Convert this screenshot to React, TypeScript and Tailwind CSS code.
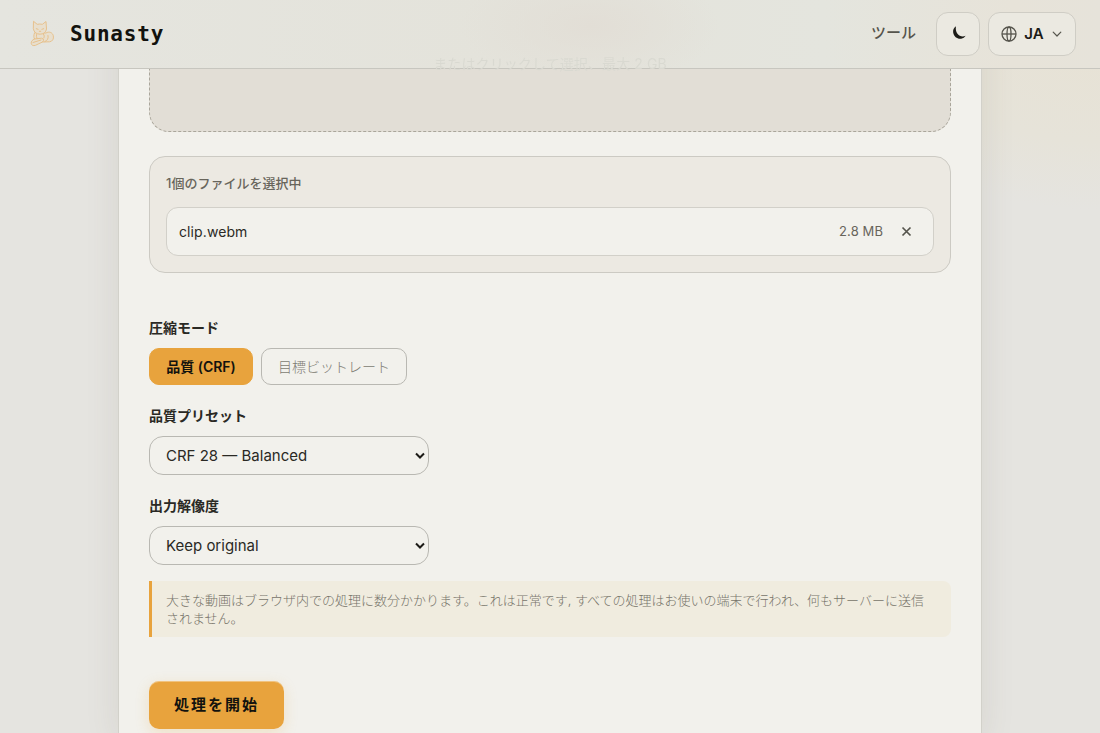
import React, { useState } from 'react'

const MODES = [
  { id: 'crf', label: '品質 (CRF)', width: 'w-[104px]' },
  { id: 'bitrate', label: '目標ビットレート', width: 'w-[146px]' },
]

function CatLogo() {
  return (
    <svg className="w-9 h-9" viewBox="0 0 36 36" fill="none" stroke="#e6bd84" strokeWidth={0.9} strokeLinecap="round" strokeLinejoin="round">
      {/* tail and body */}
      <path fill="#e8dfce" d="M10.500 17c-1 2.500-.8 4.500 0 6-2 .8-3.500 2.300-3.300 4.300.2 2 2 2.800 4.300 2l7-3.300 7-.2c3-.3 4.500-3 3.800-6-.7-3.300-4.300-4.800-7-3z" />
      {/* head */}
      <path fill="#e8dfce" d="M9.800 5.500l3.400 2.800q2.600-.6 5.200 0L22 5.500l.5 7.500q-.8 5-6.500 5.200-5.800-.2-6.600-5.200z" />
      <path d="M12.300 12.700l1.800.6M19.700 12.700l-1.800.6M15.300 15.300h1.400M10.500 23l7-.8q2.500.3 2 2.500l-1 1.300M9 26.500l8-2.500M21 25.500q4-1.500 3-6M12.500 18.500q-.5 2 .5 4M19.500 18q1.500 2 .5 4" />
    </svg>
  )
}

function Header() {
  return (
    <header className="relative z-10 h-[69px] -mb-[69px] px-6 flex items-center justify-between border-b border-[#c7c6bf] bg-[radial-gradient(ellipse_130px_60px_at_590px_26px,#e2ded6_0%,transparent_100%),linear-gradient(90deg,#e5e5df_0%,#e4e3db_45%,#e4e5de_75%,#e7e3d9_92%,#e6e3da_100%)]">
      <div className="flex items-center gap-[10px]">
        <CatLogo />
        <span className="pt-0.5 font-['DejaVu_Sans_Mono',monospace] font-bold text-[21px] tracking-[0.8px] text-[#12120e]">
          Sunasty
        </span>
      </div>
      <nav className="flex items-center gap-2">
        <a className="mr-3 text-[15px] font-medium text-[#55544c] relative -top-px">ツール</a>
        <button aria-label="テーマ" className="w-11 h-11 flex items-center justify-center rounded-xl border border-[#cfcdc5] bg-[#ebe9e1]">
          <svg className="w-4 h-4 ml-0.5 -mt-0.5" viewBox="0 0 16 16" fill="#1c1b17">
            <path d="M5 1.300C2.800 2.600 1.700 5 2.200 7.800c.8 4.200 4.300 6.500 8 5.900 2-.3 3.500-1.400 4.400-2.900-1.700.9-3.900 1-5.800 0C5.600 9.200 4.200 5 5 1.300z" />
          </svg>
        </button>
        <button className="w-[88px] h-11 flex items-center rounded-xl border border-[#cfcdc5] bg-[#ebe9e1] pl-3">
          <svg className="w-4 h-4" viewBox="0 0 16 16" fill="none" stroke="#55544c" strokeWidth={1.3}>
            <circle cx="8" cy="8" r="7" />
            <ellipse cx="8" cy="8" rx="2" ry="7" />
            <path d="M1 8h14" />
          </svg>
          <span className="ml-[7px] w-5 text-[15px] font-semibold text-[#1c1b17]">JA</span>
          <svg className="ml-2 w-[10px] h-[10px]" viewBox="0 0 10 10" fill="none" stroke="#55544c" strokeWidth={1.2} strokeLinecap="round" strokeLinejoin="round">
            <path d="M1.200 3.200L5 7l3.800-3.800" />
          </svg>
        </button>
      </nav>
    </header>
  )
}

function SelectField({ label, value }: { label: string; value: string }) {
  return (
    <div className="flex flex-col">
      <label className="h-5 leading-[18px] text-[14px] font-semibold text-[#2a2924]">{label}</label>
      <div className="mt-[9px] w-[280px] h-[39px] flex items-center justify-between pl-4 pr-[3px] rounded-[14px] border border-[#b9b8b2] text-[15px] text-[#2a2924]">
        <span className="pt-0.5">{value}</span>
        <svg className="w-[10px] h-[10px]" viewBox="0 0 10 10" fill="none" stroke="#1c1b17" strokeWidth={2}>
          <path d="M1 2.500L5 6.500l4-4" />
        </svg>
      </div>
    </div>
  )
}

export default function App() {
  const [mode, setMode] = useState('crf')

  return (
    <div className="h-[733px] overflow-hidden bg-[#e5e4e0] bg-[radial-gradient(ellipse_280px_170px_at_1100px_40px,#e7e2d5_0%,#e6e3d9_60%,#e5e4e0_100%)] font-[Inter,'Noto_Sans_CJK_JP',sans-serif]">
      <Header />
      <main className="w-[864px] h-[733px] mx-auto px-[30px] border-x border-[#d2d1ca] bg-[#f2f1ec] shadow-[0_8px_32px_rgba(90,85,60,0.11)]">
        <div className="h-[132px] pt-[51px] text-center rounded-b-[20px] border border-t-0 border-dashed border-[#aaa69b] bg-[#e2ded6]">
          <span className="relative z-20 inline-block h-5 leading-5 text-[14px] tracking-[0.1px] bg-clip-text text-transparent bg-[linear-gradient(180deg,#d9d9d1_17px,#77746b_18px)]">
            またはクリックして選択、最大 2 GB
          </span>
        </div>

        <section className="mt-6 h-[117px] px-4 pt-4 rounded-2xl border border-[#cccac3] bg-[#ece9e2]">
          <p className="h-5 leading-5 text-[13px] font-medium text-[#68655b]">1個のファイルを選択中</p>
          <div className="mt-[14px] h-[49px] px-3 flex items-center rounded-xl border border-[#d2d0c9] bg-[#f2f1ec]">
            <span className="flex-1 pb-px text-[14px] tracking-[0.1px] text-[#2a2924]">clip.webm</span>
            <span className="text-[13px] tracking-[0.1px] text-[#68655b]">2.8 MB</span>
            <button aria-label="削除" className="ml-[18px] mr-[9px]">
              <svg className="w-[11px] h-[11px]" viewBox="0 0 11 11" stroke="#55544c" strokeWidth={1.7}>
                <path d="M1.500 1.500l8 8M9.500 1.500l-8 8" />
              </svg>
            </button>
          </div>
        </section>

        <div className="mt-[46px] flex flex-col">
          <label className="h-5 leading-[18px] text-[14px] font-semibold text-[#2a2924]">圧縮モード</label>
          <div className="mt-[9px] flex gap-2">
            {MODES.map((m) => (
              <button
                key={m.id}
                onClick={() => setMode(m.id)}
                className={`${m.width} h-[37px] rounded-[10px] border text-[14px] whitespace-nowrap ${
                  mode === m.id
                    ? 'bg-[#e8a33d] border-[#e8a33d] font-semibold text-[#12120e]'
                    : 'border-[#b9b8b2] text-[#7d7b72] font-light'
                }`}
              >
                {m.label}
              </button>
            ))}
          </div>
        </div>

        <div className="mt-[22px] flex flex-col gap-[22px]">
          <SelectField label="品質プリセット" value="CRF 28 — Balanced" />
          <SelectField label="出力解像度" value="Keep original" />
        </div>

        <p className="mt-4 h-14 pl-[14px] pr-[22px] pt-[10px] border-l-3 border-[#e8a33d] rounded-r-lg bg-[#f0ecdf] text-[13px] leading-[18px] font-light text-[#77746a]">
          大きな動画はブラウザ内での処理に数分かかります。これは正常です, すべての処理はお使いの端末で行われ、何もサーバーに送信されません。
        </p>

        <button className="mt-11 w-[135px] h-12 rounded-[10px] bg-[#e8a33d] text-[15px] font-semibold tracking-[2px] text-[#12120e] shadow-[inset_0_1px_0_rgba(255,255,255,0.35),0_4px_14px_rgba(232,163,61,0.22)]">
          処理を開始
        </button>
      </main>
    </div>
  )
}
